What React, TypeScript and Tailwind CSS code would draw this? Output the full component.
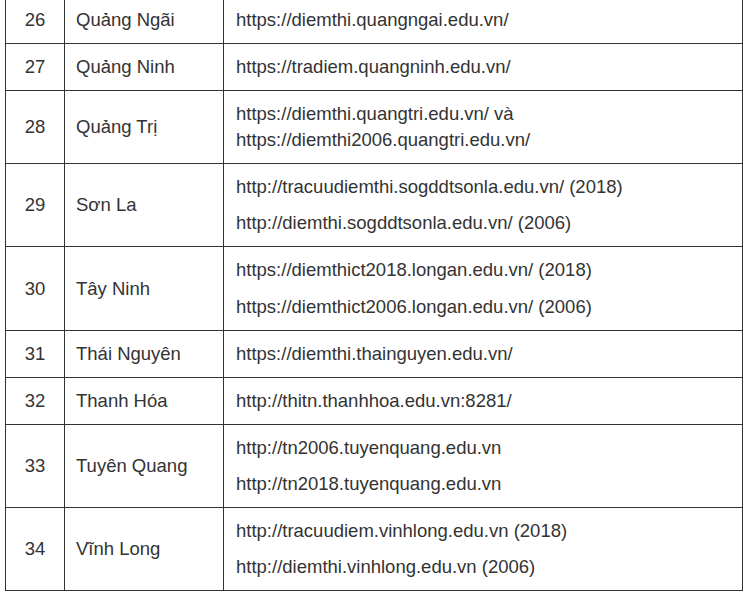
import React from "react";

type Row = { n: string; name: string; links: string[][]; extra?: boolean };

const rows: Row[] = [
  { n: "26", name: "Quảng Ngãi", links: [["https://diemthi.quangngai.edu.vn/"]] },
  { n: "27", name: "Quảng Ninh", links: [["https://tradiem.quangninh.edu.vn/"]] },
  {
    n: "28",
    name: "Quảng Trị",
    links: [["https://diemthi.quangtri.edu.vn/ và", "https://diemthi2006.quangtri.edu.vn/"]],
  },
  {
    n: "29",
    name: "Sơn La",
    links: [
      ["http://tracuudiemthi.sogddtsonla.edu.vn/ (2018)"],
      ["http://diemthi.sogddtsonla.edu.vn/ (2006)"],
    ],
  },
  {
    n: "30",
    name: "Tây Ninh",
    extra: true,
    links: [
      ["https://diemthict2018.longan.edu.vn/ (2018)"],
      ["https://diemthict2006.longan.edu.vn/ (2006)"],
    ],
  },
  { n: "31", name: "Thái Nguyên", links: [["https://diemthi.thainguyen.edu.vn/"]] },
  { n: "32", name: "Thanh Hóa", links: [["http://thitn.thanhhoa.edu.vn:8281/"]] },
  {
    n: "33",
    name: "Tuyên Quang",
    links: [["http://tn2006.tuyenquang.edu.vn"], ["http://tn2018.tuyenquang.edu.vn"]],
  },
  {
    n: "34",
    name: "Vĩnh Long",
    links: [
      ["http://tracuudiem.vinhlong.edu.vn (2018)"],
      ["http://diemthi.vinhlong.edu.vn (2006)"],
    ],
  },
];

export default function App() {
  return (
    <div
      className="w-[747px] h-[594px] overflow-hidden bg-white text-[#333] text-[18.5px] leading-[26px]"
      style={{ fontFamily: '"Liberation Sans", Arial, sans-serif' }}
    >
      <div className="pl-[5px] mt-[-4px]">
        <table className="border-collapse table-fixed w-[737px]">
          <colgroup>
            <col className="w-[59px]" />
            <col className="w-[159px]" />
            <col className="w-[519px]" />
          </colgroup>
          <tbody>
            {rows.map((r) => (
              <tr key={r.n}>
                <td className="border border-[#333] text-center align-middle py-[10px] px-0">{r.n}</td>
                <td className="border border-[#333] align-middle py-[10px] pl-[11px] pr-2 whitespace-nowrap">
                  {r.name}
                </td>
                <td className="border border-[#333] align-middle py-[10px] pl-[12px] pr-2">
                  <div className={r.extra ? "flex flex-col gap-[11px]" : "flex flex-col gap-[10px]"}>
                    {r.links.map((p, i) => (
                      <p key={i} className="whitespace-nowrap">
                        {p.map((l, j) => (
                          <span key={j} className="block">
                            {l}
                          </span>
                        ))}
                      </p>
                    ))}
                  </div>
                </td>
              </tr>
            ))}
          </tbody>
        </table>
      </div>
    </div>
  );
}
